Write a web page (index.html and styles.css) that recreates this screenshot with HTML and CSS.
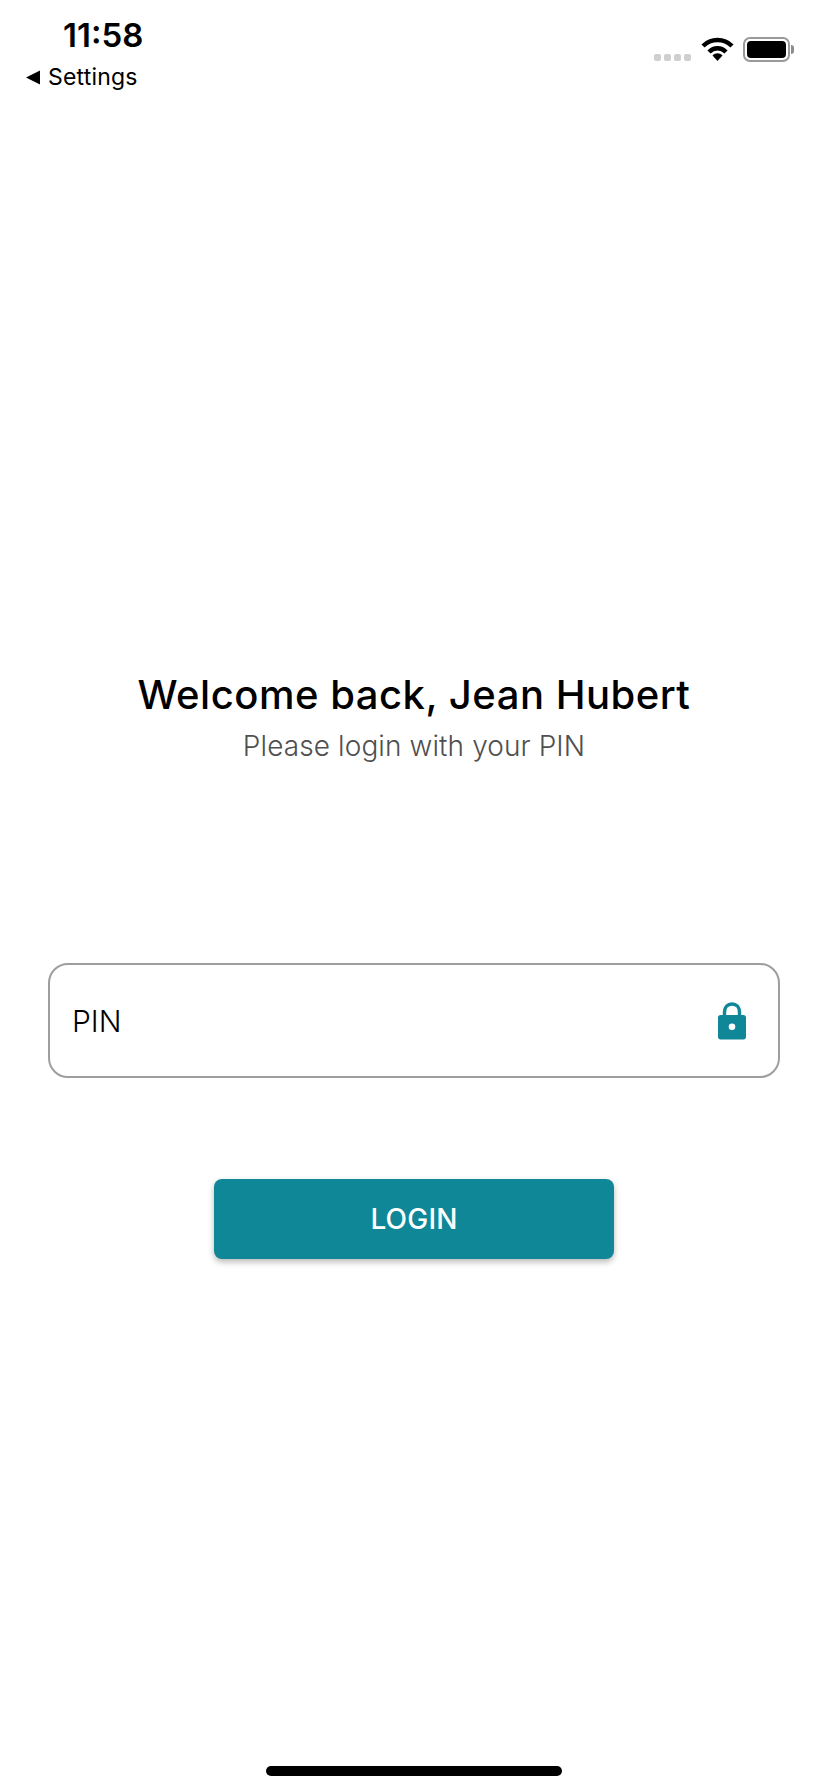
FILE: index.html
```html
<!DOCTYPE html>
<html lang="en">

<head>
    <meta charset="UTF-8" />
    <title>Login</title>
    <link rel="stylesheet" href="styles.css">
</head>

<body>
    <div class="app">
        <div class="status-bar">
            <div class="status-left">
                <div class="time">11:58</div>
                <div class="back-link">
                    <svg class="back-arrow" width="14" height="15" viewBox="0 0 14 15">
                        <path d="M0 7.5 L14 0.5 V14.5 Z" fill="#000" />
                    </svg>
                    <span>Settings</span>
                </div>
            </div>
            <div class="status-right">
                <div class="signal">
                    <span></span><span></span><span></span><span></span>
                </div>
                <svg class="wifi" width="33" height="24" viewBox="0 0 33 24">
                    <path d="M2 9 C10 1 23 1 31 9" fill="none" stroke="#000" stroke-width="4.5" />
                    <path d="M8 15 C13 10 20 10 25 15" fill="none" stroke="#000" stroke-width="4.5" />
                    <path d="M11.5 18.5 C14.5 15.5 18.5 15.5 21.5 18.5 L16.5 24 Z" fill="#000" />
                </svg>
                <div class="battery">
                    <div class="battery-body">
                        <div class="battery-level"></div>
                    </div>
                    <div class="battery-tip"></div>
                </div>
            </div>
        </div>

        <div class="welcome">
            <h2>Welcome back, Jean Hubert</h2>
            <p>Please login with your PIN</p>
        </div>

        <div class="pin-field">
            <span class="pin-label">PIN</span>
            <svg class="lock" width="30" height="38" viewBox="0 0 30 38">
                <path d="M7.5 15 V10 C7.5 5 10.5 2 15 2 C19.5 2 22.5 5 22.5 10 V15" fill="none" stroke="#0f8797" stroke-width="3.4" />
                <path fill-rule="evenodd" fill="#0f8797" d="M3.5 13 H26.5 C28 13 29 14 29 15.5 V35 C29 36.500 28 37.500 26.500 37.500 H3.500 C2 37.500 1 36.500 1 35 V15.500 C1 14 2 13 3.500 13 Z M15 21.500 A3.300 3.300 0 1 0 15 28.100 A3.300 3.300 0 1 0 15 21.500 Z" />
            </svg>
        </div>

        <button type="submit" class="login-button">LOGIN</button>

        <div class="home-indicator"></div>
    </div>
</body>

</html>
```

FILE: styles.css
```css
body {
    font-family: Inter, "Liberation Sans", sans-serif;
    background: #fff;
    color: #000;
    margin: 0;
}

.app {
    height: 1792px;
    display: flex;
    flex-direction: column;
    align-items: center;
    overflow: hidden;
}

.status-bar {
    width: 100%;
    box-sizing: border-box;
    padding: 14px 34px 0 26px;
    display: flex;
    justify-content: space-between;
    height: 672px;
}

.time {
    font-size: 33px;
    font-weight: 600;
    line-height: 42px;
    margin-left: 37px;
}

.back-link {
    display: flex;
    align-items: center;
    gap: 8px;
    font-size: 23px;
    font-weight: 400;
    line-height: 26px;
    margin-top: 8px;
    letter-spacing: 0.2px;
}

.status-right {
    display: flex;
    align-items: flex-start;
    padding-top: 23px;
}

.signal {
    display: flex;
    gap: 3px;
    margin-top: 17px;
    margin-right: 10px;
}

.signal span {
    width: 7px;
    height: 7px;
    border-radius: 2px;
    background: #cfcfcf;
}

.wifi {
    margin-right: 9px;
}

.battery {
    display: flex;
    align-items: center;
}

.battery-body {
    width: 47px;
    height: 25px;
    box-sizing: border-box;
    border: 2px solid #9a9a9a;
    border-radius: 7px;
    padding: 2px;
}

.battery-level {
    height: 100%;
    background: #000;
    border-radius: 4px;
}

.battery-tip {
    width: 3px;
    height: 9px;
    margin-left: 1px;
    background: #8c8c8c;
    border-radius: 0 3px 3px 0;
}

.welcome {
    text-align: center;
}

.welcome h2 {
    margin: 0;
    font-size: 40px;
    font-weight: 500;
    line-height: 46px;
    letter-spacing: 0.5px;
}

.welcome p {
    margin: 12px 0 0;
    font-size: 28px;
    font-weight: 300;
    line-height: 32px;
    letter-spacing: 0.1px;
    color: #4f4f4f;
}

.pin-field {
    width: 732px;
    height: 115px;
    box-sizing: border-box;
    margin-top: 201px;
    padding: 0 31px 0 22px;
    border: 2px solid #9e9e9e;
    border-radius: 20px;
    display: flex;
    align-items: center;
    justify-content: space-between;
}

.pin-label {
    font-size: 30px;
    font-weight: 300;
    line-height: 34px;
    color: #000;
}

.login-button {
    width: 400px;
    height: 80px;
    margin-top: 101px;
    background: #0f8797;
    border: none;
    border-radius: 8px;
    color: #fff;
    font-family: inherit;
    font-size: 28px;
    font-weight: 500;
    letter-spacing: 0.2px;
    box-shadow: 0 3px 6px rgba(0, 0, 0, 0.28);
}

.home-indicator {
    width: 296px;
    height: 10px;
    margin-top: auto;
    margin-bottom: 16px;
    background: #000;
    border-radius: 5px;
}
```
